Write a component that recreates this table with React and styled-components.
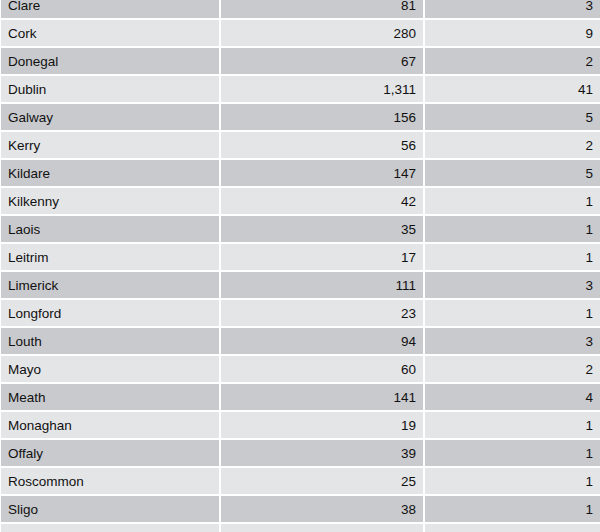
import React from "react";
import styled, { createGlobalStyle } from "styled-components";

const GlobalStyle = createGlobalStyle`
  html, body {
    margin: 0;
    padding: 0;
    background: #ffffff;
    overflow: hidden;
  }
  body {
    font-family: "Liberation Sans", Arial, sans-serif;
  }
`;

const Page = styled.div`
  width: 600px;
  height: 532px;
  overflow: hidden;
  background: #ffffff;
`;

// the table is scrolled a little, so the first row is cut at the top
const Table = styled.div`
  margin-top: -8px;
  padding-left: 1px;
  display: flex;
  flex-direction: column;
  gap: 2px;
`;

const Row = styled.div`
  display: grid;
  grid-template-columns: 218px 202px 1fr;
  column-gap: 2px;
  height: 26px;
`;

const Cell = styled.div`
  display: flex;
  align-items: center;
  justify-content: ${(p) => (p.$num ? "flex-end" : "flex-start")};
  padding: ${(p) => (p.$num ? "1px 7px 0 0" : "1px 0 0 7px")};
  background: ${(p) => (p.$dark ? "#c9cacd" : "#e4e5e7")};
  color: #111111;
  font-size: 13.5px;
  line-height: 1;
`;

const rows = [
  ["Clare", "81", "3"],
  ["Cork", "280", "9"],
  ["Donegal", "67", "2"],
  ["Dublin", "1,311", "41"],
  ["Galway", "156", "5"],
  ["Kerry", "56", "2"],
  ["Kildare", "147", "5"],
  ["Kilkenny", "42", "1"],
  ["Laois", "35", "1"],
  ["Leitrim", "17", "1"],
  ["Limerick", "111", "3"],
  ["Longford", "23", "1"],
  ["Louth", "94", "3"],
  ["Mayo", "60", "2"],
  ["Meath", "141", "4"],
  ["Monaghan", "19", "1"],
  ["Offaly", "39", "1"],
  ["Roscommon", "25", "1"],
  ["Sligo", "38", "1"],
  ["Tipperary", "158", "4"],
];

export default function App() {
  return (
    <>
      <GlobalStyle />
      <Page>
        <Table>
          {rows.map(([county, count, seats], i) => {
            const dark = i % 2 === 0;
            return (
              <Row key={county}>
                <Cell $dark={dark}>{county}</Cell>
                <Cell $dark={dark} $num>{count}</Cell>
                <Cell $dark={dark} $num>{seats}</Cell>
              </Row>
            );
          })}
        </Table>
      </Page>
    </>
  );
}
